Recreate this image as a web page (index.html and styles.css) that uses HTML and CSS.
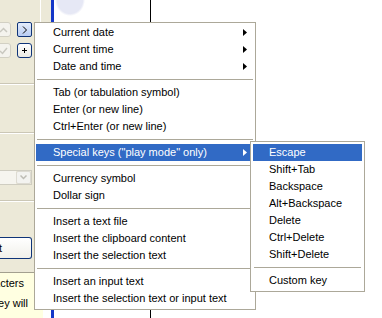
FILE: index.html
```html
<!doctype html>
<html lang="en">
<head>
	<meta charset="utf-8">
	<meta name="viewport" content="width=device-width, initial-scale=1">
	<title>Insert menu</title>
	<link rel="stylesheet" href="styles.css">
</head>
<body>

	<div class="layout">

		<aside class="side">
			<div class="panel">

				<div class="tool-row">
					<span class="tool tool-off">
						<svg width="9" height="6" viewBox="0 0 9 6"><polyline points="1,5 4.5,1.5 8,5" fill="none" stroke="#c9c8c0" stroke-width="1.5"/></svg>
					</span>
					<span class="tool tool-hot">
						<svg width="6" height="8" viewBox="0 0 6 8"><polyline points="1,0.5 4.5,4 1,7.5" fill="none" stroke="#000" stroke-width="1"/></svg>
					</span>
				</div>

				<div class="tool-row tool-row-next">
					<span class="tool tool-off">
						<svg width="9" height="8" viewBox="0 0 9 8"><polyline points="1,4 3.5,6.5 8,1" fill="none" stroke="#c9c8c0" stroke-width="1.5"/></svg>
					</span>
					<span class="tool tool-push">
						<svg width="5" height="5" viewBox="0 0 5 5"><path d="M2.5 0v5M0 2.5h5" stroke="#000" stroke-width="1"/></svg>
					</span>
				</div>

				<div class="rule rule-1"></div>
				<div class="rule rule-2"></div>

				<div class="combo">
					<span class="combo-field"></span>
					<span class="combo-btn">
						<svg width="7" height="5" viewBox="0 0 7 5"><polyline points="0.5,0.5 3.5,3.5 6.5,0.5" fill="none" stroke="#bdbcb4" stroke-width="1.5"/></svg>
					</span>
				</div>

				<div class="rule rule-3"></div>

				<div class="btn">Insert</div>

			</div>

			<div class="hint-row">
				<div class="hint">
					<div class="hint-line">Maximum number of characters</div>
					<div class="hint-line">Text typed when the key will</div>
				</div>
				<div class="hint-fill"></div>
			</div>
		</aside>

		<div class="canvas">
			<div class="guide"></div>
		</div>

	</div>

	<!-- Context menu -->
	<ul class="menu menu-main">
		<li class="menu-item has-sub">Current date</li>
		<li class="menu-item has-sub">Current time</li>
		<li class="menu-item has-sub">Date and time</li>
		<li class="menu-sep"></li>
		<li class="menu-item">Tab (or tabulation symbol)</li>
		<li class="menu-item">Enter (or new line)</li>
		<li class="menu-item">Ctrl+Enter (or new line)</li>
		<li class="menu-sep"></li>
		<li class="menu-item has-sub is-active">Special keys ("play mode" only)</li>
		<li class="menu-sep"></li>
		<li class="menu-item">Currency symbol</li>
		<li class="menu-item">Dollar sign</li>
		<li class="menu-sep"></li>
		<li class="menu-item">Insert a text file</li>
		<li class="menu-item">Insert the clipboard content</li>
		<li class="menu-item">Insert the selection text</li>
		<li class="menu-sep"></li>
		<li class="menu-item">Insert an input text</li>
		<li class="menu-item">Insert the selection text or input text</li>
	</ul>

	<!-- Submenu "Special keys" -->
	<ul class="menu menu-sub">
		<li class="menu-item is-active">Escape</li>
		<li class="menu-item">Shift+Tab</li>
		<li class="menu-item">Backspace</li>
		<li class="menu-item">Alt+Backspace</li>
		<li class="menu-item">Delete</li>
		<li class="menu-item">Ctrl+Delete</li>
		<li class="menu-item">Shift+Delete</li>
		<li class="menu-sep"></li>
		<li class="menu-item">Custom key</li>
	</ul>

</body>
</html>
```

FILE: styles.css
```css
:root {
	--font-family: 'Liberation Sans', 'Arial', sans-serif;
	--xp-face: #ece9d8;/* фон панелей XP */
	--xp-line: #aca899;/* рамка и разделители меню */
	--xp-select: #316ac5;/* подсветка пункта меню */
	--xp-navy: #0f3478;/* рамка кнопок */
}

*,
::after,
::before {
	box-sizing: border-box;
	margin: 0;
	padding: 0;
}

body {
	height: 100vh;
	overflow: hidden;
	color: #000;
	font: 400 11px/13px var(--font-family);
	background: #fff;
}

.layout {
	display: flex;
	height: 100%;
}

/* Левая панель (обрезана краем окна): */

.side {
	display: flex;
	flex-direction: column;
	flex: none;
	width: 51px;
	background: var(--xp-face);
}

.panel {
	display: flex;
	flex: 1;
	flex-direction: column;
	width: 41px;
	overflow: hidden;
	border-right: 1px solid #fff;
}

.tool-row {
	display: flex;
	gap: 6px;
	height: 15px;
	margin: 22px 0 0 -4px;
}

.tool-row-next {
	margin-top: 6px;
}

.tool {
	display: flex;
	flex: none;
	align-items: center;
	justify-content: center;
	width: 15px;
	height: 15px;
	border-radius: 3px;
}

.tool-off {
	background: #f4f3ee;
	border: 1px solid #d2d0c4;
}

.tool-hot {
	background: linear-gradient(#e3ecfc, #b9cdf3);
	border: 1px solid var(--xp-navy);
	border-radius: 2px;
}

.tool-push {
	background: linear-gradient(#fff, #eceae2);
	border: 1px solid var(--xp-navy);
}

.rule {
	flex: none;
	height: 2px;
	border-top: 1px solid #cbc7b6;
	border-bottom: 1px solid #fff;
}

.rule-1 {
	margin-top: 25px;
}

.rule-2 {
	margin-top: 47px;
}

.rule-3 {
	margin-top: 15px;
}

.combo {
	display: flex;
	flex: none;
	width: 32px;
	height: 15px;
	margin-top: 36px;
	border: 1px solid #cfcdc1;
	border-left: 0;
}

.combo-field {
	flex: 1;
	background: #f6f5ef;
}

.combo-btn {
	display: flex;
	align-items: center;
	justify-content: center;
	width: 15px;
	background: #f3f3f0;
	border: 1px solid #dddbd2;
	border-radius: 2px;
}

.btn {
	display: flex;
	flex: none;
	align-items: center;
	justify-content: flex-end;
	width: 32px;
	height: 22px;
	margin-top: 35px;
	padding-right: 29px;
	overflow: hidden;
	white-space: nowrap;
	background: linear-gradient(#fff, #f1f0ea);
	border: 1px solid var(--xp-navy);
	border-left: 0;
	border-radius: 0 3px 3px 0;
}

.hint-row {
	display: flex;
	flex: none;
	height: 46px;
}

.hint {
	width: 43px;
	padding-top: 4px;
	overflow: hidden;
	background: #ffffe1;
	border-top: 1px solid #a3a08f;
}

.hint-line {
	display: flex;
	justify-content: flex-end;/* текст уходит за левый край */
	padding-right: 19px;
	white-space: nowrap;
}

.hint-line + .hint-line {
	margin-top: 7px;
	padding-right: 15px;
}

.hint-fill {
	flex: 1;
	background: #fff;
}

/* Рабочее поле: */

.canvas {
	display: flex;
	flex: 1;
	background: radial-gradient(15px 16px at 16px 0, #e6e8f5 85%, rgba(230, 232, 245, 0) 100%) no-repeat, #fff;
	border-left: 3px solid #1437c8;
}

.guide {
	width: 1px;
	margin-left: 96px;
	background: #000;
}

/* Контекстное меню: */

.menu {
	position: absolute;
	list-style: none;
	background: #fff;
	border: 1px solid var(--xp-line);
}

.menu-main {
	top: 22px;
	left: 34px;
	width: 222px;
	padding: 1px 1px 2px;
}

.menu-sub {
	top: 141px;
	left: 250px;
	width: 115px;
	padding: 2px;
}

.menu-item {
	display: flex;
	align-items: center;
	height: 17px;
	padding: 0 7px 0 17px;
	white-space: nowrap;
}

.menu-sub .menu-item {
	padding-left: 16px;
}

.menu-item.is-active {
	color: #fff;
	background: var(--xp-select);
}

.has-sub::after {
	content: "";
	width: 4px;
	height: 7px;
	margin-left: auto;
	background: currentColor;
	clip-path: polygon(0 0, 100% 50%, 0 100%);
}

.menu-sep {
	height: 1px;
	margin: 4px 1px;
	background: var(--xp-line);
}
```
